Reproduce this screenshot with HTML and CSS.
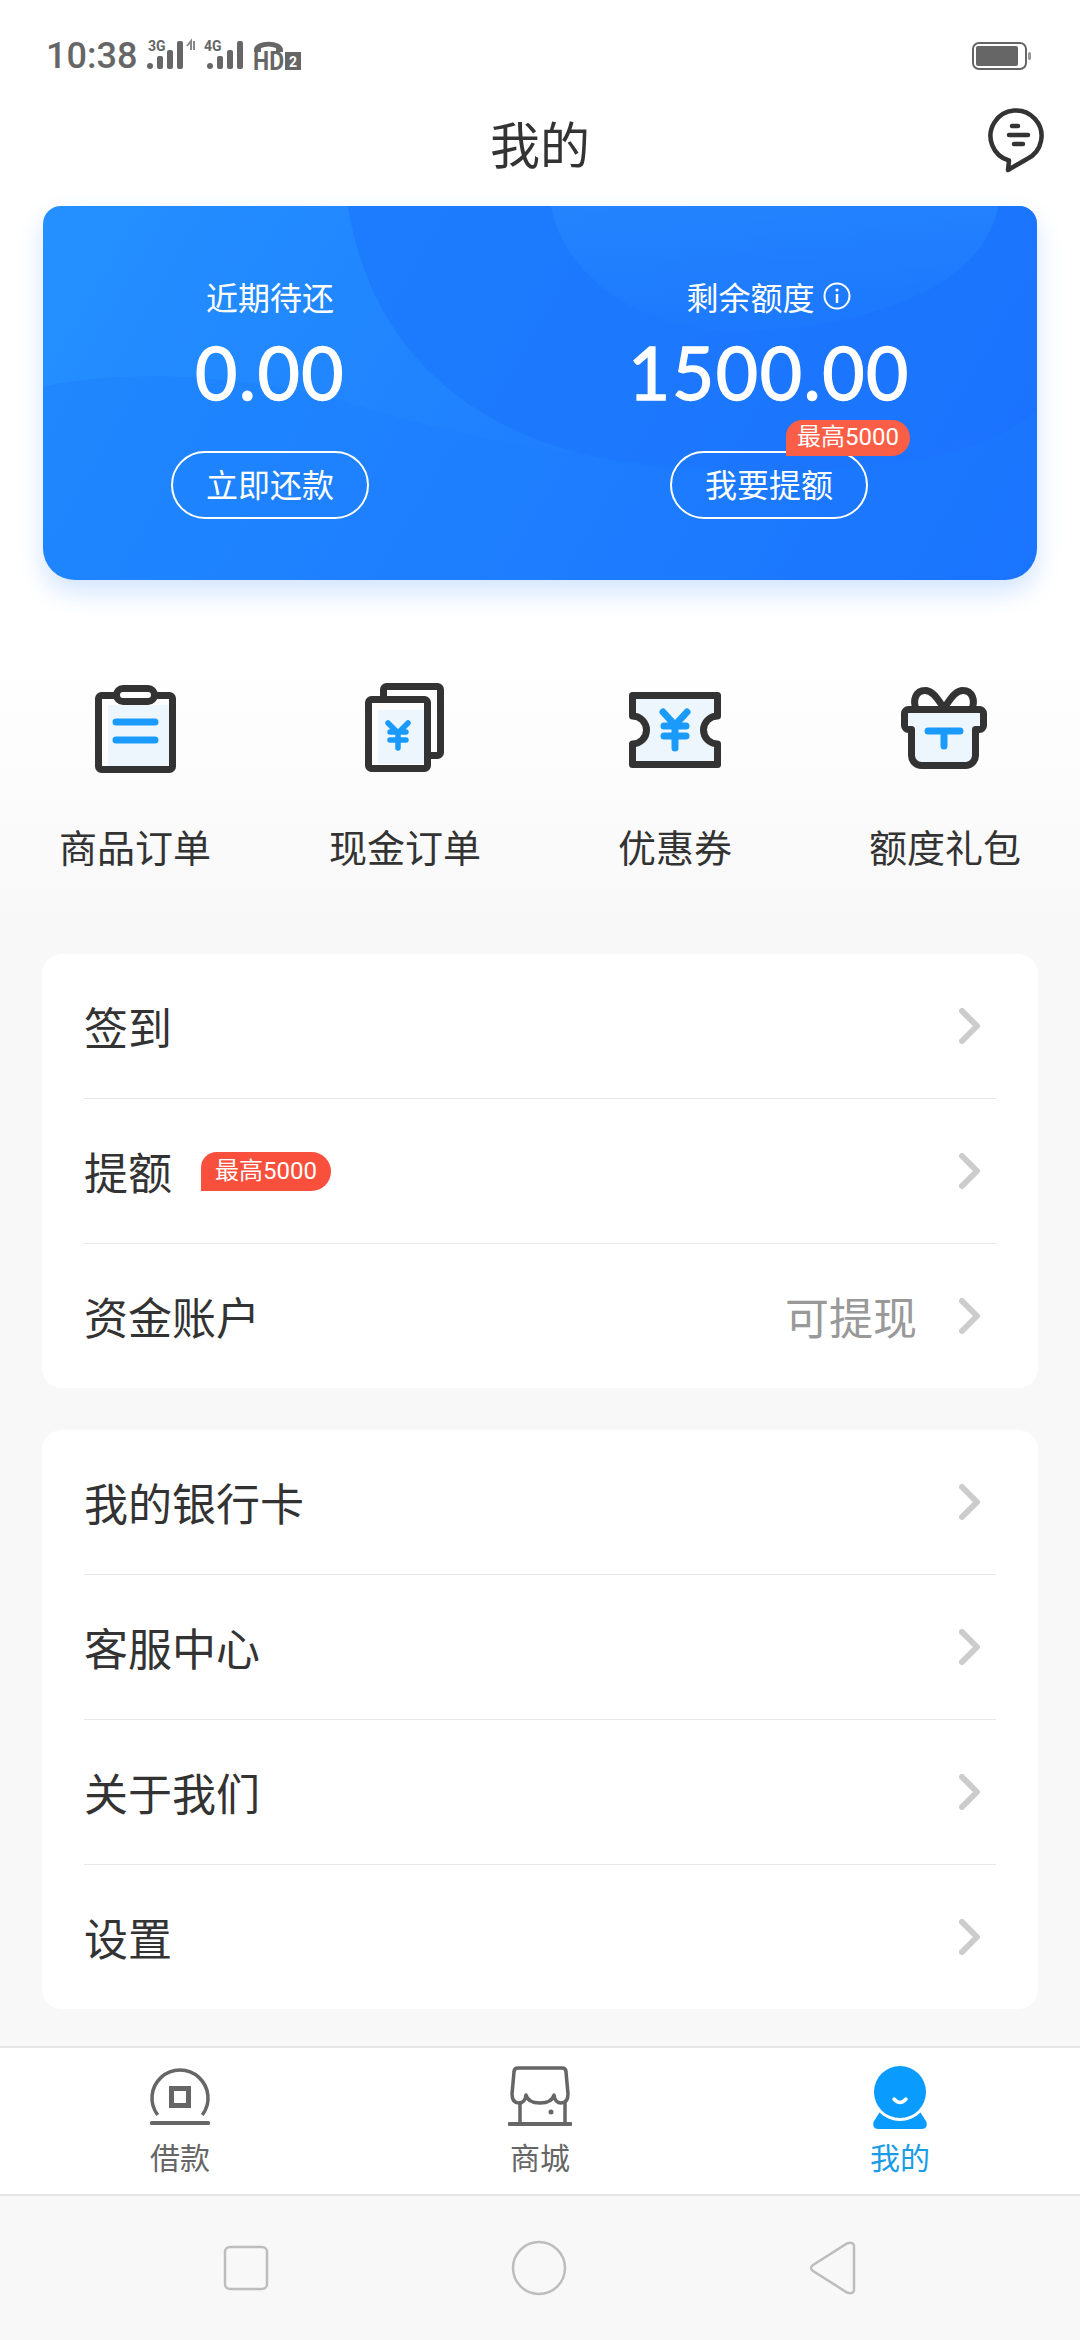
FILE: index.html
```html
<!DOCTYPE html>
<html>
<head>
<meta charset="utf-8">
<title>我的</title>
<link rel="stylesheet" href="styles.css">
</head>
<body>
<div class="page">

	<div class="status">
		<span class="time">10:38</span>
		<svg class="status-icons" width="170" height="46" viewBox="0 -6 170 46">
			<text x="1" y="11" class="tiny">3G</text>
			<rect x="0" y="23" width="6" height="6" rx="3"/>
			<rect x="10" y="16" width="6" height="13" rx="2"/>
			<rect x="20" y="10" width="6" height="19" rx="2"/>
			<rect x="30" y="1" width="6" height="28" rx="2"/>
			<path class="arrow" d="M44 10V1L40 6M47 1v9"/>
			<text x="57" y="11" class="tiny">4G</text>
			<rect x="60" y="23" width="6" height="6" rx="3"/>
			<rect x="70" y="16" width="6" height="13" rx="2"/>
			<rect x="80" y="10" width="6" height="19" rx="2"/>
			<rect x="90" y="1" width="6" height="28" rx="2"/>
			<path d="M107 10c0-11 29-11 29 0v2h-7V8c-5-2-10-2-15 0v4h-7z"/>
			<text x="106" y="30" class="hd" textLength="31" lengthAdjust="spacingAndGlyphs">HD</text>
			<rect x="138" y="12" width="16" height="18" fill="#666"/>
			<text x="142" y="26.500" class="two">2</text>
		</svg>
		<svg class="battery" width="60" height="28" viewBox="0 0 60 28">
			<rect x="1" y="1" width="53" height="26" rx="6" fill="none" stroke="#666" stroke-width="2"/>
			<rect x="4" y="4" width="42" height="20" rx="2" fill="#666"/>
			<rect x="56" y="10" width="3" height="8" rx="1.500" fill="#999"/>
		</svg>
	</div>

	<div class="header">
		<h1>我的</h1>
		<svg class="msg-icon" width="60" height="68" viewBox="0 0 60 68">
			<path d="M40 53L21 64L22 54.500A25.500 25.500 0 1 1 40 53Z" fill="none" stroke="#333" stroke-width="4.500" stroke-linejoin="round"/>
			<path d="M25 20h6M22 29h19M27 38h9" fill="none" stroke="#333" stroke-width="4.500" stroke-linecap="round"/>
		</svg>
	</div>

	<div class="content">
		<div class="account">
			<svg class="account-bg" width="994" height="374" viewBox="0 0 994 374">
				<defs>
					<linearGradient id="fade" x1="0" y1="0" x2="0" y2="1">
						<stop offset="0" stop-color="#2d92ff" stop-opacity=".4"/>
						<stop offset="1" stop-color="#2d92ff" stop-opacity=".06"/>
					</linearGradient>
				</defs>
				<path d="M305 0C325 130 410 215 540 248C700 285 900 270 994 190V0Z" fill="#1b74fb" opacity=".6"/>
				<path d="M508 0C520 70 600 125 690 125C800 125 940 90 955 0Z" fill="url(#fade)"/>
				<path d="M0 181C70 165 180 165 300 195C440 240 620 270 800 262C880 258 950 240 994 205V374H0Z" fill="#1c7cfd" opacity=".4"/>
			</svg>
			<div class="account-col">
				<div class="account-label">近期待还</div>
				<div class="account-num">0.00</div>
				<div class="btn">立即还款</div>
			</div>
			<div class="account-col">
				<div class="account-label">剩余额度
					<svg width="30" height="30" viewBox="0 0 30 30">
						<circle cx="15" cy="15" r="12.500" fill="none" stroke="#fff" stroke-width="2"/>
						<path d="M15 13v9" stroke="#fff" stroke-width="2.500"/>
						<circle cx="15" cy="9" r="1.600" fill="#fff"/>
					</svg>
				</div>
				<div class="account-num">1500.00</div>
				<div class="btn">我要提额<span class="badge">最高5000</span></div>
			</div>
		</div>

		<div class="shortcuts">
			<div class="shortcut">
				<svg width="96" height="96" viewBox="0 0 96 96">
					<rect x="21" y="25" width="64" height="61" fill="#edf6fd"/>
					<rect x="11.500" y="15.500" width="74" height="74" rx="3" fill="none" stroke="#333" stroke-width="7"/>
					<rect x="29.500" y="8.500" width="38" height="13" rx="6.500" fill="#fff" stroke="#333" stroke-width="7"/>
					<path d="M29 42h39M29 60h39" stroke="#1a9bfc" stroke-width="7" stroke-linecap="round"/>
				</svg>
				<span>商品订单</span>
			</div>
			<div class="shortcut">
				<svg width="96" height="96" viewBox="0 0 96 96">
					<path d="M26.500 16V9.500a3 3 0 0 1 3-3h51a3 3 0 0 1 3 3v63a3 3 0 0 1-3 3H74" fill="none" stroke="#333" stroke-width="7"/>
					<rect x="21" y="30" width="46" height="54" fill="#edf6fd"/>
					<rect x="11.500" y="19.500" width="59" height="69" rx="3" fill="none" stroke="#333" stroke-width="7"/>
					<path d="M31 43l10 10 10-10M33 52h16M33 60h16M41 53v15" fill="none" stroke="#1a9bfc" stroke-width="5.500" stroke-linecap="round"/>
				</svg>
				<span>现金订单</span>
			</div>
			<div class="shortcut">
				<svg width="96" height="96" viewBox="0 0 96 96">
					<path d="M5.500 15.500H90.500V36A14 14 0 0 0 90.500 64V84.500H5.500V64A14 14 0 0 0 5.500 36Z" fill="#edf6fd" stroke="#333" stroke-width="7" stroke-linejoin="round"/>
					<path d="M36 32l12 13 12-13M37 46h22M37 56h22M48 46v22" fill="none" stroke="#1a9bfc" stroke-width="7" stroke-linecap="round"/>
				</svg>
				<span>优惠券</span>
			</div>
			<div class="shortcut">
				<svg width="96" height="96" viewBox="0 0 96 96">
					<path d="M47 28C41 20 36 10.500 28 10.500C19 10.500 15 20 19.500 30M47 28C53 20 58 10.500 66 10.500C75 10.500 79 20 74.500 30" fill="none" stroke="#333" stroke-width="7"/>
					<path d="M14.500 49.500h-3a4 4 0 0 1-4-4V33.500a4 4 0 0 1 4-4H82.500a4 4 0 0 1 4 4V45.500a4 4 0 0 1-4 4h-4V75.500a10 10 0 0 1-10 10H24.500a10 10 0 0 1-10-10Z" fill="#edf6fd" stroke="#333" stroke-width="7" stroke-linejoin="round"/>
					<path d="M31 51h32M47 51v15" fill="none" stroke="#1a9bfc" stroke-width="7" stroke-linecap="round"/>
				</svg>
				<span>额度礼包</span>
			</div>
		</div>

		<div class="list">
			<div class="row"><span class="row-name">签到</span><svg class="chev" width="22" height="36" viewBox="0 0 22 36"><path d="M3 3l15 15L3 33"/></svg></div>
			<div class="row"><span class="row-name">提额</span><span class="row-badge">最高5000</span><svg class="chev" width="22" height="36" viewBox="0 0 22 36"><path d="M3 3l15 15L3 33"/></svg></div>
			<div class="row"><span class="row-name">资金账户</span><span class="row-note">可提现</span><svg class="chev" width="22" height="36" viewBox="0 0 22 36"><path d="M3 3l15 15L3 33"/></svg></div>
		</div>

		<div class="list">
			<div class="row"><span class="row-name">我的银行卡</span><svg class="chev" width="22" height="36" viewBox="0 0 22 36"><path d="M3 3l15 15L3 33"/></svg></div>
			<div class="row"><span class="row-name">客服中心</span><svg class="chev" width="22" height="36" viewBox="0 0 22 36"><path d="M3 3l15 15L3 33"/></svg></div>
			<div class="row"><span class="row-name">关于我们</span><svg class="chev" width="22" height="36" viewBox="0 0 22 36"><path d="M3 3l15 15L3 33"/></svg></div>
			<div class="row"><span class="row-name">设置</span><svg class="chev" width="22" height="36" viewBox="0 0 22 36"><path d="M3 3l15 15L3 33"/></svg></div>
		</div>
	</div>

	<div class="tabs">
		<div class="tab">
			<svg width="64" height="64" viewBox="0 0 64 64">
				<path d="M9.700 49A28 28 0 1 1 54.300 49" fill="none" stroke="#666" stroke-width="3.500"/>
				<rect x="23.500" y="22.500" width="17" height="17" fill="none" stroke="#666" stroke-width="5"/>
				<rect x="2" y="55" width="60" height="4" rx="1.500" fill="#666"/>
			</svg>
			<span>借款</span>
		</div>
		<div class="tab">
			<svg width="64" height="64" viewBox="0 0 64 64">
				<path d="M4 28L6 6Q6 2 10 2H54Q58 2 58 6L60 28Q60 37 53 37Q47 37 46 29Q44 37 32 37Q20 37 18 29Q17 37 11 37Q4 37 4 28Z" fill="none" stroke="#666" stroke-width="3.500" stroke-linejoin="round"/>
				<path d="M12 37V57M57 37V57" stroke="#666" stroke-width="3.500"/>
				<rect x="0" y="56" width="64" height="4" rx="1" fill="#666"/>
				<circle cx="43" cy="46" r="2.500" fill="#666"/>
			</svg>
			<span>商城</span>
		</div>
		<div class="tab tab-on">
			<svg width="64" height="64" viewBox="0 0 64 64">
				<path d="M13 44L5.500 56Q4 63 10 63H54Q60 63 58.500 56L51 44Z" fill="#0a9bff"/>
				<circle cx="32" cy="26" r="29" fill="#fff"/>
				<circle cx="32" cy="26" r="26" fill="#0a9bff"/>
				<path d="M26 33Q32 40 38 33" fill="none" stroke="#fff" stroke-width="3.500" stroke-linecap="round"/>
			</svg>
			<span>我的</span>
		</div>
	</div>

	<div class="nav">
		<svg width="46" height="46" viewBox="0 0 46 46"><rect x="2" y="2" width="42" height="42" rx="5"/></svg>
		<svg width="56" height="56" viewBox="0 0 56 56"><circle cx="28" cy="28" r="26"/></svg>
		<svg width="48" height="54" viewBox="0 0 48 54"><path d="M4 24L38 2.500Q45 0 45 6V48Q45 54 38 51.500L4 30Q0 27 4 24Z"/></svg>
	</div>
</div>
</body>
</html>
```

FILE: styles.css
```css
* {
	box-sizing: border-box;
}

body {
	margin: 0;
	background: #fff;
	font-family: Roboto, "Noto Sans CJK SC", sans-serif;
	color: #333;
}

.page {
	width: 1080px;
	height: 2340px;
	display: flex;
	flex-direction: column;
	background: #f8f8f8;
	overflow: hidden;
}

/* status bar */
.status {
	height: 100px;
	padding: 36px 48px 0 46px;
	display: flex;
	align-items: flex-start;
	background: #fff;
}

.time {
	font-size: 36px;
	line-height: 40px;
	font-weight: 500;
	color: #666;
}

.status-icons {
	margin: -2px 0 0 10px;
	fill: #666;
}

.tiny {
	font-size: 14px;
	font-weight: 700;
}

.hd {
	font-size: 25px;
	font-weight: 700;
}

.two {
	font-size: 14px;
	font-weight: 700;
	fill: #fff;
}

.arrow {
	fill: none;
	stroke: #888;
	stroke-width: 2;
}

.battery {
	margin: 6px 0 0 auto;
}

/* title */
.header {
	height: 106px;
	padding-bottom: 12px;
	position: relative;
	display: flex;
	align-items: center;
	justify-content: center;
	background: #fff;
}

.header h1 {
	margin: 0;
	font-size: 50px;
	line-height: 70px;
	font-weight: 400;
	color: #333;
}

.msg-icon {
	position: absolute;
	right: 33px;
	top: 6px;
}

.content {
	flex: 1;
	background: linear-gradient(#fff 0, #fff 450px, #f8f8f8 720px);
}

/* blue card */
.account {
	position: relative;
	width: 994px;
	height: 374px;
	margin: 0 0 0 43px;
	padding: 69px 0 0 77px;
	display: flex;
	gap: 199px;
	border-radius: 18px 18px 32px 32px;
	background: linear-gradient(120deg, #2491ff, #1a6fff);
	box-shadow: 0 12px 26px rgba(30, 120, 255, .2);
	color: #fff;
}

.account-bg {
	position: absolute;
	left: 0;
	top: 0;
	border-radius: 18px 18px 32px 32px;
}

.account-col {
	position: relative;
	width: 300px;
	display: flex;
	flex-direction: column;
	align-items: center;
}

.account-label {
	display: flex;
	align-items: center;
	gap: 7px;
	height: 42px;
	font-size: 32px;
	white-space: nowrap;
}

.account-num {
	margin-top: 15px;
	height: 80px;
	font-family: Lato, Roboto, sans-serif;
	font-size: 73px;
	line-height: 80px;
	font-weight: 400;
	letter-spacing: 1.500px;
	-webkit-text-stroke: 1.300px #fff;
}

.btn {
	position: relative;
	width: 198px;
	height: 68px;
	margin-top: 39px;
	border: 2px solid #fff;
	border-radius: 34px;
	font-size: 32px;
	line-height: 66px;
	text-align: center;
}

.badge {
	position: absolute;
	right: -44px;
	top: -33px;
	width: 124px;
	height: 36px;
	border-radius: 16px 18px 18px 0;
	background: #fb5e47;
	font-size: 24px;
	line-height: 35px;
	text-align: center;
}

/* four shortcuts */
.shortcuts {
	display: grid;
	grid-template-columns: repeat(4, 270px);
	padding-top: 100px;
}

.shortcut {
	display: flex;
	flex-direction: column;
	align-items: center;
	gap: 48px;
	font-size: 38px;
	line-height: 50px;
}

/* lists */
.list {
	width: 996px;
	margin: 80px 0 -38px 42px;
	padding: 0 42px;
	border-radius: 20px;
	background: #fff;
}

.row {
	height: 145px;
	display: flex;
	align-items: center;
	font-size: 44px;
	border-top: 1px solid #e8e8e8;
}

.row:first-child {
	border-top: 0;
	height: 144px;
}

.row-badge {
	width: 130px;
	height: 39px;
	margin-left: 29px;
	border-radius: 16px 20px 20px 0;
	background: #f8503c;
	color: #fff;
	font-size: 24px;
	line-height: 38px;
	text-align: center;
}

.row-note {
	margin-left: auto;
	color: #999;
	font-size: 44px;
}

.row-note + .chev {
	margin-left: 42px;
}

.chev {
	margin: 0 15px 0 auto;
	fill: none;
	stroke: #ccc;
	stroke-width: 6;
	stroke-linecap: round;
	stroke-linejoin: round;
}

/* bottom bar */
.tabs {
	height: 150px;
	padding-top: 18px;
	display: flex;
	background: #fff;
	border-top: 2px solid #e6e6e6;
	border-bottom: 2px solid #e6e6e6;
}

.tab {
	flex: 1;
	display: flex;
	flex-direction: column;
	align-items: center;
	gap: 9px;
	font-size: 30px;
	line-height: 40px;
	color: #666;
}

.tab-on {
	color: #1a9be6;
}

.nav {
	height: 144px;
	padding: 0 223px;
	display: flex;
	align-items: center;
	justify-content: space-between;
	background: #f8f8f8;
}

.nav svg {
	fill: none;
	stroke: #bdbdbd;
	stroke-width: 2.500;
}
```
